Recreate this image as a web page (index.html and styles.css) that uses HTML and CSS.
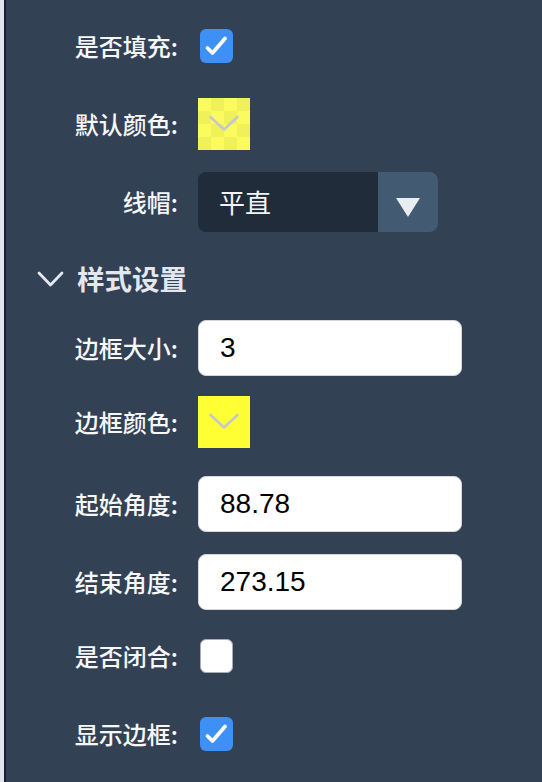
FILE: index.html
```html
<!DOCTYPE html>
<html lang="zh-CN">
<head>
<meta charset="utf-8">
<title>样式设置</title>
<link rel="stylesheet" href="styles.css">
</head>
<body>
<div class="frame">
  <div class="strip"></div>
  <div class="panel">
    <div class="row row-check">
      <label class="label">是否填充:</label>
      <span class="checkbox checked">
        <svg viewBox="0 0 33 33" width="33" height="33"><path d="M7.5 19 L12.5 24 L25 9.5" fill="none" stroke="#fff" stroke-width="3.8" stroke-linecap="round" stroke-linejoin="round"/></svg>
      </span>
    </div>
    <div class="row row-swatch">
      <label class="label">默认颜色:</label>
      <span class="swatch swatch-alpha">
        <svg viewBox="0 0 52 52" width="52" height="52"><path d="M12.5 19 L26 31.5 L39.5 19" fill="none" stroke="#c4c6d0" stroke-width="2.6" stroke-linecap="round" stroke-linejoin="round"/></svg>
      </span>
    </div>
    <div class="row row-select">
      <label class="label">线帽:</label>
      <div class="select">
        <span class="select-value">平直</span>
        <span class="select-btn">
          <svg viewBox="0 0 60 60" width="60" height="60"><polygon points="18,26 42,26 30,45" fill="#e9edf1"/></svg>
        </span>
      </div>
    </div>
    <div class="section-head">
      <svg class="chev" viewBox="0 0 27 17" width="27" height="17"><path d="M2 2 L13.5 14 L25 2" fill="none" stroke="#e2e8f0" stroke-width="2.8" stroke-linecap="round" stroke-linejoin="round"/></svg>
      <span class="section-title">样式设置</span>
    </div>
    <div class="row row-input">
      <label class="label">边框大小:</label>
      <input class="input" type="text" value="3">
    </div>
    <div class="row row-swatch">
      <label class="label">边框颜色:</label>
      <span class="swatch swatch-solid">
        <svg viewBox="0 0 52 52" width="52" height="52"><path d="M12.5 19 L26 31.5 L39.5 19" fill="none" stroke="#c4c6d0" stroke-width="2.6" stroke-linecap="round" stroke-linejoin="round"/></svg>
      </span>
    </div>
    <div class="row row-input">
      <label class="label">起始角度:</label>
      <input class="input" type="text" value="88.78">
    </div>
    <div class="row row-input">
      <label class="label">结束角度:</label>
      <input class="input" type="text" value="273.15">
    </div>
    <div class="row row-check">
      <label class="label">是否闭合:</label>
      <span class="checkbox"></span>
    </div>
    <div class="row row-check">
      <label class="label">显示边框:</label>
      <span class="checkbox checked">
        <svg viewBox="0 0 33 33" width="33" height="33"><path d="M7.5 19 L12.5 24 L25 9.5" fill="none" stroke="#fff" stroke-width="3.8" stroke-linecap="round" stroke-linejoin="round"/></svg>
      </span>
    </div>
  </div>
</div>
</body>
</html>
```

FILE: styles.css
```css
* { box-sizing: border-box; }
html, body { margin: 0; padding: 0; height: 100%; }
body {
  background: #334155;
  font-family: "Noto Sans CJK SC", "Noto Sans", sans-serif;
  color: #f4f6f9;
  overflow: hidden;
}
.frame {
  display: flex;
  height: 100vh;
}
.strip {
  width: 4px;
  background: #dfe5ec;
  flex: none;
}
.panel {
  flex: 1;
  border-left: 2px solid #18212d;
  background: #334155;
  padding-top: 29px;
  display: flex;
  flex-direction: column;
}
.row {
  display: grid;
  grid-template-columns: 172px auto;
  column-gap: 20px;
  align-items: center;
  justify-content: start;
}
.label {
  text-align: right;
  font-size: 24px;
  font-weight: 500;
  line-height: 30px;
  color: #f6f7f9;
}
.row-check { height: 34px; }
.row-swatch { height: 52px; }
.row-select { height: 60px; }
.row-input { height: 56px; }

.panel > :nth-child(2) { margin-top: 35px; }
.panel > :nth-child(3) { margin-top: 22px; }
.panel > :nth-child(4) { margin-top: 30px; }
.panel > :nth-child(5) { margin-top: 26px; }
.panel > :nth-child(6) { margin-top: 20px; }
.panel > :nth-child(7) { margin-top: 28px; }
.panel > :nth-child(8) { margin-top: 22px; }
.panel > :nth-child(9) { margin-top: 29px; }
.panel > :nth-child(10) { margin-top: 44px; }

.checkbox {
  display: block;
  width: 33px;
  height: 34px;
  margin-left: 2px;
  border-radius: 6px;
  background: #ffffff;
  border: 1px solid #a8adb5;
}
.checkbox svg { display: block; }
.checkbox.checked {
  background: #3d90f6;
  border: none;
}

.swatch {
  display: block;
  width: 52px;
  height: 52px;
}
.swatch svg { display: block; }
.swatch-solid { background: #ffff33; }
.swatch-alpha {
  background-color: #fbfb5e;
  background-image:
    linear-gradient(45deg, #f0f058 25%, transparent 25%, transparent 75%, #f0f058 75%),
    linear-gradient(45deg, #f0f058 25%, transparent 25%, transparent 75%, #f0f058 75%);
  background-size: 26px 26px;
  background-position: 0 0, 13px 13px;
}

.select {
  display: flex;
  width: 240px;
  height: 60px;
  border-radius: 8px;
  overflow: hidden;
  background: #212c3a;
}
.select-value {
  flex: 1;
  padding-left: 21px;
  font-size: 26px;
  line-height: 60px;
  color: #f1f4f7;
}
.select-btn {
  width: 60px;
  height: 60px;
  background: #435a73;
}
.select-btn svg { display: block; }

.section-head {
  height: 32px;
  display: flex;
  align-items: center;
  padding-left: 31px;
}
.chev {
  display: block;
  width: 27px;
  height: 17px;
  margin-right: 13px;
  margin-top: 2px;
}
.section-title {
  font-size: 27.5px;
  font-weight: 700;
  color: #e4e8ee;
  line-height: 32px;
}

.input {
  display: block;
  width: 264px;
  height: 56px;
  border: 1.5px solid #d3d6db;
  border-radius: 8px;
  background: #ffffff;
  padding: 0 0 0 21px;
  font-family: "Liberation Sans", Arial, sans-serif;
  font-size: 28px;
  color: #000;
  outline: none;
}
```
